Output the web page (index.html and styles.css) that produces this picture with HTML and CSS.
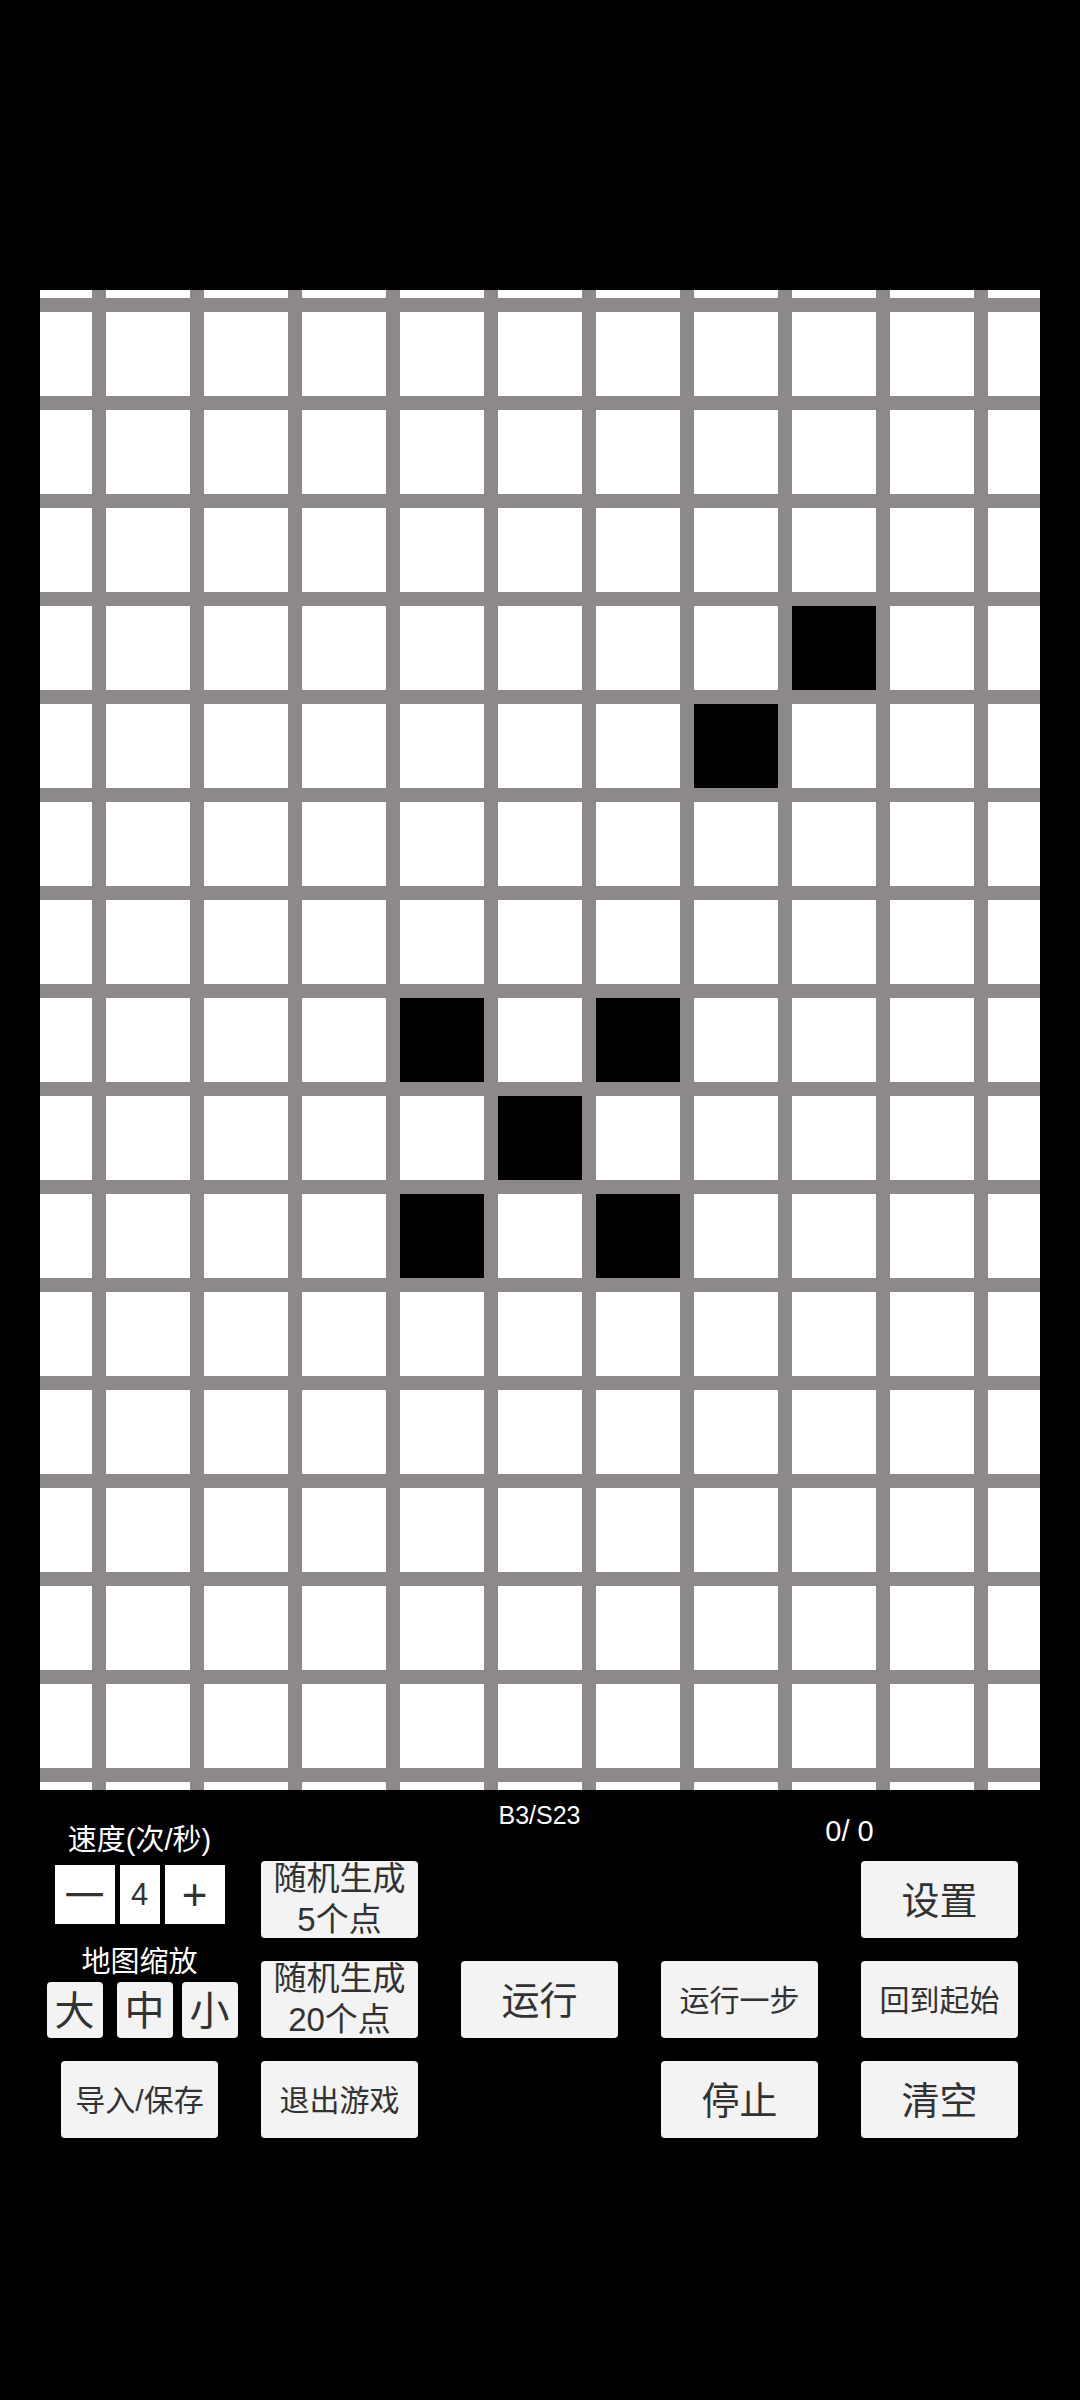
FILE: index.html
```html
<!DOCTYPE html>
<html lang="zh">
<head>
<meta charset="utf-8">
<title>Life</title>
<link rel="stylesheet" href="styles.css">
</head>
<body>
<div class="screen">
  <div class="board">
    <i></i><i></i><i></i><i></i><i></i><i></i><i></i><i></i><i></i><i></i><i></i>
    <i></i><i></i><i></i><i></i><i></i><i></i><i></i><i></i><i></i><i></i><i></i>
    <i></i><i></i><i></i><i></i><i></i><i></i><i></i><i></i><i></i><i></i><i></i>
    <i></i><i></i><i></i><i></i><i></i><i></i><i></i><i></i><i></i><i></i><i></i>
    <i></i><i></i><i></i><i></i><i></i><i></i><i></i><i></i><i class="on"></i><i></i><i></i>
    <i></i><i></i><i></i><i></i><i></i><i></i><i></i><i class="on"></i><i></i><i></i><i></i>
    <i></i><i></i><i></i><i></i><i></i><i></i><i></i><i></i><i></i><i></i><i></i>
    <i></i><i></i><i></i><i></i><i></i><i></i><i></i><i></i><i></i><i></i><i></i>
    <i></i><i></i><i></i><i></i><i class="on"></i><i></i><i class="on"></i><i></i><i></i><i></i><i></i>
    <i></i><i></i><i></i><i></i><i></i><i class="on"></i><i></i><i></i><i></i><i></i><i></i>
    <i></i><i></i><i></i><i></i><i class="on"></i><i></i><i class="on"></i><i></i><i></i><i></i><i></i>
    <i></i><i></i><i></i><i></i><i></i><i></i><i></i><i></i><i></i><i></i><i></i>
    <i></i><i></i><i></i><i></i><i></i><i></i><i></i><i></i><i></i><i></i><i></i>
    <i></i><i></i><i></i><i></i><i></i><i></i><i></i><i></i><i></i><i></i><i></i>
    <i></i><i></i><i></i><i></i><i></i><i></i><i></i><i></i><i></i><i></i><i></i>
    <i></i><i></i><i></i><i></i><i></i><i></i><i></i><i></i><i></i><i></i><i></i>
    <i></i><i></i><i></i><i></i><i></i><i></i><i></i><i></i><i></i><i></i><i></i>
  </div>

  <div class="panel">
    <div class="left-block">
      <div class="label">速度(次/秒)</div>
      <div class="speed-row">
        <div class="speed-box minus">一</div>
        <div class="speed-box value">4</div>
        <div class="speed-box plus">+</div>
      </div>
      <div class="label zoom-label">地图缩放</div>
      <div class="zoom-row">
        <button class="btn zoom-btn">大</button>
        <button class="btn zoom-btn gap-wide">中</button>
        <button class="btn zoom-btn">小</button>
      </div>
    </div>

    <div class="rule">B3/S23</div>
    <div class="count">0/ 0</div>

    <button class="btn two-line c2 r2">随机生成<br>5个点</button>
    <button class="btn big c5 r2">设置</button>

    <button class="btn two-line c2 r3">随机生成<br>20个点</button>
    <button class="btn big c3 r3">运行</button>
    <button class="btn mid c4 r3">运行一步</button>
    <button class="btn mid c5 r3">回到起始</button>

    <button class="btn mid c1 r4">导入/保存</button>
    <button class="btn mid c2 r4">退出游戏</button>
    <button class="btn big c4 r4">停止</button>
    <button class="btn big c5 r4">清空</button>
  </div>
</div>
</body>
</html>
```

FILE: styles.css
```css
html, body {
  margin: 0;
  padding: 0;
  background: #000;
}

body {
  width: 1080px;
  min-height: 2400px;
  font-family: "Liberation Sans", "Noto Sans CJK SC", sans-serif;
  color: #fff;
}

.screen {
  padding-top: 290px;
}

.board {
  margin: 0 40px;
  width: 1000px;
  height: 1500px;
  display: grid;
  grid-template-columns: 52px repeat(9, 84px) 52px;
  grid-template-rows: 8px repeat(15, 84px) 8px;
  gap: 14px;
  background: #8c8988;
}

.board i {
  display: block;
  background: #fff;
}

.board i.on {
  background: #000;
}

.panel {
  display: grid;
  grid-template-columns: repeat(5, 157px);
  grid-template-rows: 48px 77px 77px 77px;
  column-gap: 43px;
  row-gap: 23px;
  padding-left: 61px;
}

.left-block {
  grid-column: 1;
  grid-row: 1 / 4;
  align-self: end;
  justify-self: center;
  display: flex;
  flex-direction: column;
  align-items: center;
}

.label {
  font-size: 29px;
  line-height: 34px;
  color: #fff;
  white-space: nowrap;
}

.speed-row {
  display: flex;
  gap: 5px;
  margin-top: 8px;
}

.speed-box {
  height: 59px;
  background: #fff;
  color: #323232;
  display: flex;
  align-items: center;
  justify-content: center;
}

.speed-box.minus {
  width: 60px;
  font-size: 40px;
  padding-bottom: 3px;
  box-sizing: border-box;
}

.speed-box.value {
  width: 40px;
  font-size: 31px;
}

.speed-box.plus {
  width: 60px;
  font-size: 44px;
}

.zoom-label {
  margin-top: 21px;
  padding-bottom: 3px;
}

.zoom-row {
  display: flex;
  gap: 9px;
  margin-left: 5px;
}

.zoom-btn {
  width: 56px;
  height: 56px;
  font-size: 40px;
}

.zoom-btn.gap-wide {
  margin-left: 5px;
}

.rule {
  grid-column: 3;
  grid-row: 1;
  justify-self: center;
  align-self: start;
  padding-top: 11px;
  font-size: 25px;
  color: #fff;
}

.count {
  grid-column: 4 / 6;
  grid-row: 1;
  align-self: start;
  padding-top: 25px;
  padding-left: 20px;
  text-align: center;
  font-size: 29px;
  color: #fff;
  white-space: pre;
}

.btn {
  border: none;
  margin: 0;
  padding: 0 0 4px 0;
  box-sizing: border-box;
  background: #f3f3f3;
  color: #323232;
  border-radius: 4px;
  font-family: "Liberation Sans", "Noto Sans CJK SC", sans-serif;
  display: flex;
  align-items: center;
  justify-content: center;
  text-align: center;
}

.big { font-size: 38px; }
.mid { font-size: 30px; }
.two-line { font-size: 33px; line-height: 41px; padding-bottom: 2px; }

.c1 { grid-column: 1; }
.c2 { grid-column: 2; }
.c3 { grid-column: 3; }
.c4 { grid-column: 4; }
.c5 { grid-column: 5; }
.r2 { grid-row: 2; }
.r3 { grid-row: 3; }
.r4 { grid-row: 4; }
```
